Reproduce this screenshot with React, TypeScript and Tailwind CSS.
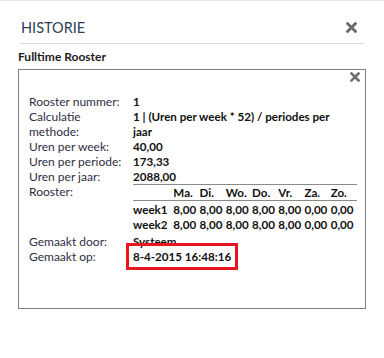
const rows: [string, string][] = [
  ["Rooster nummer:", "1"],
  ["Calculatie methode:", "1 | (Uren per week * 52) / periodes per jaar"],
  ["Uren per week:", "40,00"],
  ["Uren per periode:", "173,33"],
  ["Uren per jaar:", "2088,00"],
];

const days = ["Ma.", "Di.", "Wo.", "Do.", "Vr.", "Za.", "Zo."];
const weeks = [
  { name: "week1", hours: ["8,00", "8,00", "8,00", "8,00", "8,00", "0,00", "0,00"] },
  { name: "week2", hours: ["8,00", "8,00", "8,00", "8,00", "8,00", "0,00", "0,00"] },
];

function Cross({ className }: { className?: string }) {
  return (
    <svg viewBox="0 0 10 10" className={className}>
      <path d="M1.5 1.5 L8.5 8.5 M8.5 1.5 L1.5 8.5" stroke="currentColor" strokeWidth="2.6" strokeLinecap="square" />
    </svg>
  );
}

export default function App() {
  return (
    <div className="w-[384px] h-[358px] bg-white border-t border-[#e6e6e6] font-['Lato',sans-serif]">
      <div className="mx-[19px] flex items-center justify-between h-[43px] pt-[11px] border-b border-[#dcdcdc]">
        <h1 className="pl-[2px] text-[14.5px] leading-[20px] text-[#2d3f57]">HISTORIE</h1>
        <Cross className="w-[11px] h-[11px] mr-[8px] text-[#6a6a6a]" />
      </div>
      <div className="mx-[18px]">
        <h2 className="h-[25px] pt-[5px] text-[12px] leading-[16px] font-bold text-[#1b1b1b]">Fulltime Rooster</h2>
        <div className="relative h-[240px] border border-[#808080] pt-[24px] pl-[10px] pr-[8px] text-[12px] leading-[15px]">
          <Cross className="absolute right-[5px] top-[2px] w-[10px] h-[10px] text-[#707070]" />
          <table className="border-collapse table-fixed w-full">
            <colgroup>
              <col className="w-[104px]" />
              <col />
            </colgroup>
            <tbody>
              {rows.map(([label, value]) => (
                <tr key={label}>
                  <td className="align-top text-[#2f2d45]">{label}</td>
                  <td className="align-top text-[11.6px] font-bold text-[#111]">
                    <div className="max-w-[212px]">{value}</div>
                  </td>
                </tr>
              ))}
              <tr>
                <td className="align-top text-[#2f2d45]">Rooster:</td>
                <td className="align-top text-[11.6px] font-bold text-[#111]">
                  <table className="border-collapse table-fixed border-t border-[#8a8a8a] w-[224px]">
                    <colgroup>
                      <col className="w-[40px]" />
                      {days.map((d) => (
                        <col key={d} className="w-[26px]" />
                      ))}
                    </colgroup>
                    <thead>
                      <tr className="border-b border-[#8a8a8a]">
                        <th className="h-[16px]"></th>
                        {days.map((d) => (
                          <th key={d} className="text-left font-bold">{d}</th>
                        ))}
                      </tr>
                    </thead>
                    <tbody>
                      {weeks.map((w, r) => (
                        <tr key={w.name}>
                          <td className={r === 0 ? "pt-[1px]" : "pb-[2px]"}>{w.name}</td>
                          {w.hours.map((h, i) => (
                            <td key={i} className={r === 0 ? "pt-[1px]" : "pb-[2px]"}>{h}</td>
                          ))}
                        </tr>
                      ))}
                    </tbody>
                  </table>
                </td>
              </tr>
              <tr>
                <td className="text-[#2f2d45]">Gemaakt door:</td>
                <td className="text-[11.6px] font-bold text-[#111]">Systeem</td>
              </tr>
              <tr>
                <td className="text-[#2f2d45]">Gemaakt op:</td>
                <td className="text-[11.6px] font-bold text-[#111]">
                  <span className="outline-[3px] outline-solid outline-[#e8161e] outline-offset-[4px]">8-4-2015 16:48:16</span>
                </td>
              </tr>
            </tbody>
          </table>
        </div>
      </div>
    </div>
  );
}
